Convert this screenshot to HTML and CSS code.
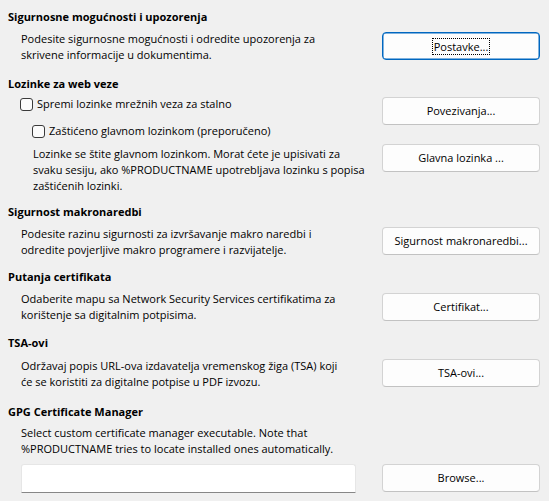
FILE: index.html
```html
<!DOCTYPE html>
<html lang="hr">
  <head>
    <meta charset="UTF-8" />
    <meta name="viewport" content="width=device-width, initial-scale=1.0" />
    <title>Sigurnost</title>
    <link rel="stylesheet" href="styles.css">
  </head>
  <body>
    <div class="section sec-options">
      <div class="heading">Sigurnosne mogućnosti i upozorenja</div>
      <div class="desc">Podesite sigurnosne mogućnosti i odredite upozorenja za<br>skrivene informacije u dokumentima.</div>
      <div class="side"><button class="btn focused"><span class="focus-ring">Postavke...</span></button></div>
    </div>

    <div class="section sec-passwords">
      <div class="heading">Lozinke za web veze</div>
      <div class="left">
        <label class="check check-main"><span class="box"></span>Spremi lozinke mrežnih veza za stalno</label>
        <label class="check check-sub"><span class="box"></span>Zaštićeno glavnom lozinkom (preporučeno)</label>
        <div class="desc desc-sub">Lozinke se štite glavnom lozinkom. Morat ćete je upisivati za<br>svaku sesiju, ako %PRODUCTNAME upotrebljava lozinku s popisa<br>zaštićenih lozinki.</div>
      </div>
      <div class="side side-stack">
        <button class="btn">Povezivanja...</button>
        <button class="btn">Glavna lozinka ...</button>
      </div>
    </div>

    <div class="section sec-macro">
      <div class="heading">Sigurnost makronaredbi</div>
      <div class="desc">Podesite razinu sigurnosti za izvršavanje makro naredbi i<br>odredite povjerljive makro programere i razvijatelje.</div>
      <div class="side"><button class="btn">Sigurnost makronaredbi...</button></div>
    </div>

    <div class="section sec-cert">
      <div class="heading">Putanja certifikata</div>
      <div class="desc">Odaberite mapu sa Network Security Services certifikatima za<br>korištenje sa digitalnim potpisima.</div>
      <div class="side"><button class="btn">Certifikat...</button></div>
    </div>

    <div class="section sec-tsa">
      <div class="heading">TSA-ovi</div>
      <div class="desc">Održavaj popis URL-ova izdavatelja vremenskog žiga (TSA) koji<br>će se koristiti za digitalne potpise u PDF izvozu.</div>
      <div class="side"><button class="btn">TSA-ovi...</button></div>
    </div>

    <div class="section sec-gpg">
      <div class="heading">GPG Certificate Manager</div>
      <div class="desc full">Select custom certificate manager executable. Note that<br>%PRODUCTNAME tries to locate installed ones automatically.</div>
      <div class="entry-wrap"><input class="entry" type="text" /></div>
      <div class="side"><button class="btn">Browse...</button></div>
    </div>
  </body>
</html>
```

FILE: styles.css
```css
* {
  margin: 0;
  padding: 0;
  box-sizing: border-box;
}

body {
  background-color: #f0f0f0;
  color: #000000;
  font-family: "Open Sans", "Noto Sans", sans-serif;
  font-size: 11px;
  line-height: 16px;
  padding: 9px 9px 0 8px;
  width: 549px;
  height: 501px;
  overflow: hidden;
}

.section {
  display: grid;
  grid-template-columns: 1fr 158px;
  align-items: start;
}

.heading {
  grid-column: 1 / -1;
  font-weight: 700;
  white-space: nowrap;
}

.desc {
  padding-left: 13px;
  margin-top: 6px;
  white-space: nowrap;
}

.side {
  margin-top: 7px;
}

.btn {
  display: flex;
  align-items: center;
  justify-content: center;
  width: 158px;
  height: 28px;
  background: #fdfdfd;
  border: 1px solid #d3d3d3;
  border-bottom-color: #c2c2c2;
  border-radius: 4px;
  font: inherit;
  color: #000000;
}

.btn.focused {
  border: 1px solid #0067c0;
  box-shadow: inset 0 0 0 0.5px #0067c0;
}

.focus-ring {
  outline: 1px dotted #000000;
  padding: 0 1px;
  line-height: 15px;
}

/* Lozinke */
.sec-passwords {
  margin-top: 13px;
}

.left {
  display: flex;
  flex-direction: column;
  align-items: flex-start;
}

.check {
  display: flex;
  align-items: center;
  gap: 4px;
  white-space: nowrap;
}

.box {
  width: 13px;
  height: 13px;
  border: 1px solid #3a3a3a;
  border-radius: 3px;
  background: #fbfbfb;
}

.check-main {
  margin-top: 4px;
  padding-left: 12px;
}

.check-sub {
  margin-top: 11px;
  padding-left: 24px;
}

.desc-sub {
  padding-left: 25px;
  margin-top: 7px;
}

.side-stack {
  display: flex;
  flex-direction: column;
  gap: 19px;
  margin-top: 5px;
}

.sec-macro {
  margin-top: 10px;
}

.sec-macro .side {
  margin-top: 7px;
}

.sec-cert {
  margin-top: 11px;
}

.sec-cert .side {
  margin-top: 8px;
}

.sec-tsa {
  margin-top: 12px;
}

.sec-tsa .desc {
  margin-top: 7px;
}

.sec-tsa .side {
  margin-top: 8px;
}

.sec-gpg {
  margin-top: 14px;
}

.sec-gpg .desc {
  grid-column: 1 / -1;
  margin-top: 5px;
}

.entry-wrap {
  padding-left: 13px;
  margin-top: 7px;
}

.entry {
  display: block;
  width: 335px;
  height: 29px;
  background: #ffffff;
  border: 1px solid #e6e6e6;
  border-bottom: 1px solid #878787;
  border-radius: 3px 3px 0 0;
}

.sec-gpg .side {
  margin-top: 7px;
}
```
